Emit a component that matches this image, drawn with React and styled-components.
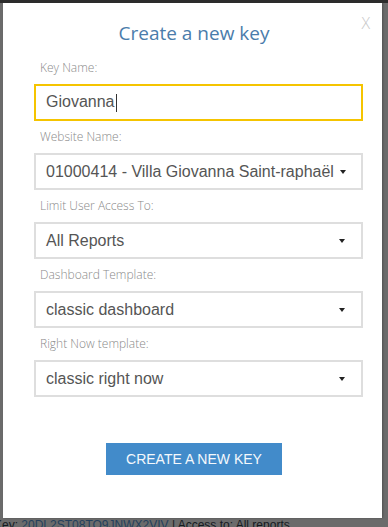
import React from "react";
import styled, { createGlobalStyle } from "styled-components";

const Global = createGlobalStyle`
  html, body { margin: 0; padding: 0; }
  body {
    background: #6b6b6b;
    overflow: hidden;
    width: 388px;
    height: 527px;
  }
`;

const Page = styled.div`
  border-top: 3px solid #2c2c2c;
  padding-left: 3px;
  height: 524px;
  overflow: hidden;
`;

const Modal = styled.div`
  position: relative;
  box-sizing: border-box;
  width: 379px;
  height: 515px;
  background: #fff;
  padding: 15px 19px 0 31px;
  display: flex;
  flex-direction: column;
  box-shadow: 1px 0 2px rgba(0, 0, 0, 0.25);
`;

const Close = styled.span`
  position: absolute;
  top: 10px;
  right: 12px;
  font-family: "Open Sans", sans-serif;
  font-weight: 300;
  font-size: 16px;
  color: #c8c8c8;
  line-height: 20px;
`;

const Title = styled.h2`
  margin: 0 9px 12px 0;
  text-align: center;
  font-family: "Open Sans", sans-serif;
  font-weight: 400;
  font-size: 19px;
  line-height: 30px;
  color: #4a7cab;
`;

const Field = styled.div`
  display: flex;
  flex-direction: column;
  flex-shrink: 0;
  gap: 8px;
  margin-bottom: 8px;
`;

const Label = styled.label`
  padding-left: 6px;
  font-family: "Open Sans", sans-serif;
  font-weight: 300;
  font-size: 12px;
  line-height: 16px;
  color: #8a8a8a;
`;

const Box = styled.div`
  box-sizing: border-box;
  flex-shrink: 0;
  height: 37px;
  border: 2px solid ${(p) => (p.$focused ? "#f5c400" : "#dedede")};
  padding: 0 16px 0 10px;
  display: flex;
  align-items: center;
  justify-content: space-between;
  font-family: "Liberation Sans", Arial, sans-serif;
  font-size: 16px;
  color: #555;
  white-space: nowrap;
`;

const Caretline = styled.span`
  display: inline-block;
  width: 1px;
  height: 18px;
  background: #333;
  margin-left: 1px;
  vertical-align: middle;
`;

const Arrow = styled.span`
  flex: none;
  width: 0;
  height: 0;
  border-left: 3.5px solid transparent;
  border-right: 3.5px solid transparent;
  border-top: 4px solid #222;
  margin-left: 6px;
`;

const Actions = styled.div`
  display: flex;
  justify-content: center;
  margin: 38px 9px 0 0;
`;

const Button = styled.button`
  width: 176px;
  height: 32px;
  border: none;
  background: #428bca;
  color: #f4f8fc;
  font-family: "Liberation Sans", Arial, sans-serif;
  font-size: 14px;
  text-transform: uppercase;
  cursor: pointer;
`;

const Behind = styled.div`
  margin: 0 0 0 -9px;
  font-family: "Liberation Sans", Arial, sans-serif;
  font-size: 12px;
  line-height: 14px;
  color: #161a1f;
  white-space: nowrap;
`;

const KeyLink = styled.span`
  color: #24405c;
`;

const fields = [
  { label: "Website Name:", value: "01000414 - Villa Giovanna Saint-raphaël" },
  { label: "Limit User Access To:", value: "All Reports" },
  { label: "Dashboard Template:", value: "classic dashboard" },
  { label: "Right Now template:", value: "classic right now" },
];

export default function App() {
  return (
    <>
      <Global />
      <Page>
        <Modal>
          <Close>X</Close>
          <Title>Create a new key</Title>
          <Field>
            <Label>Key Name:</Label>
            <Box $focused>
              <span>
                Giovanna
                <Caretline />
              </span>
            </Box>
          </Field>
          {fields.map((f) => (
            <Field key={f.label}>
              <Label>{f.label}</Label>
              <Box>
                <span>{f.value}</span>
                <Arrow />
              </Box>
            </Field>
          ))}
          <Actions>
            <Button>Create a new key</Button>
          </Actions>
        </Modal>
        <Behind>
          Key: <KeyLink>20DL2ST08TO9JNWX2VIV</KeyLink> | Access to: All reports
        </Behind>
      </Page>
    </>
  );
}
